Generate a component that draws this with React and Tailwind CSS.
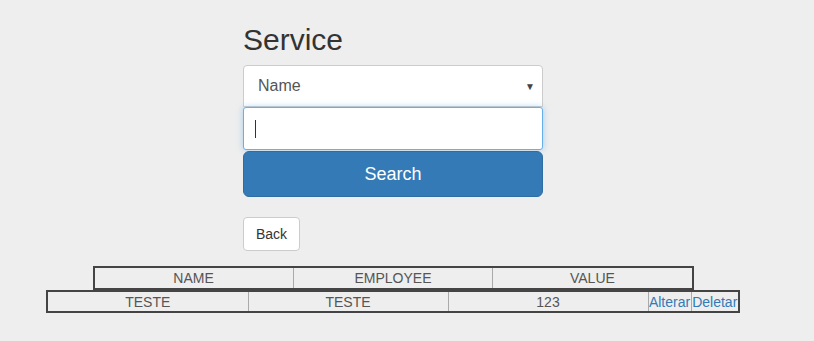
const HEAD = ['NAME', 'EMPLOYEE', 'VALUE']
const ROWS = [{ name: 'TESTE', employee: 'TESTE', value: '123' }]

export default function App() {
  return (
    <div className="min-h-[341px] bg-[#eeeeee] font-['Liberation_Sans',Arial,sans-serif] text-[#333]">
      <div className="ml-[243px] w-[300px] flex flex-col items-center pt-[23px]">
        {/* Form */}
        <div className="w-full">
          <h2 className="text-[30px] leading-[33px] mb-[9px]">Service</h2>

          <div className="h-[42px] bg-white border border-[#cccccc] rounded-t-[4px] flex items-center justify-between pl-[14px] pr-[7px] text-[16px] text-[#555]">
            <span>Name</span>
            <span className="text-[10px] text-[#444]">▼</span>
          </div>

          <div className="h-[43px] bg-white border border-[#66afe9] rounded-[3px] shadow-[0_0_6px_rgba(102,175,233,0.5)] flex items-center pl-[11px]">
            <span className="w-px h-[18px] bg-[#333]" />
          </div>

          <button className="w-full h-[46px] mt-px bg-[#337ab7] border border-[#2e6da4] rounded-[6px] text-white text-[18px]">
            Search
          </button>

          <button className="mt-[20px] h-[34px] w-[57px] bg-white border border-[#cccccc] rounded-[4px] text-[14px] text-[#333]">
            Back
          </button>
        </div>

        {/* Tables */}
        <table className="mt-[15px] shrink-0 w-[601px] min-w-[601px] table-fixed border-2 border-[#444] border-collapse text-[14px] text-[#555] text-center leading-[18px]">
          <thead>
            <tr>
              {HEAD.map((h) => (
                <th key={h} className="border border-[#aaa] font-normal p-0 h-[22px]">{h}</th>
              ))}
            </tr>
          </thead>
        </table>
        <table className="shrink-0 w-[692px] min-w-[692px] table-fixed border-2 border-[#444] border-collapse text-[14px] text-[#555] text-center leading-[18px]">
          <colgroup>
            <col className="w-[201px]" />
            <col className="w-[200px]" />
            <col className="w-[200px]" />
            <col className="w-[43px]" />
            <col className="w-[48px]" />
          </colgroup>
          <tbody>
            {ROWS.map((r, i) => (
              <tr key={i}>
                <td className="border border-[#aaa] p-0 h-[21px]">{r.name}</td>
                <td className="border border-[#aaa] p-0">{r.employee}</td>
                <td className="border border-[#aaa] p-0">{r.value}</td>
                <td className="border border-[#aaa] p-0 whitespace-nowrap"><a className="text-[#337ab7]">Alterar</a></td>
                <td className="border border-[#aaa] p-0 whitespace-nowrap"><a className="text-[#337ab7]">Deletar</a></td>
              </tr>
            ))}
          </tbody>
        </table>
      </div>
    </div>
  )
}
